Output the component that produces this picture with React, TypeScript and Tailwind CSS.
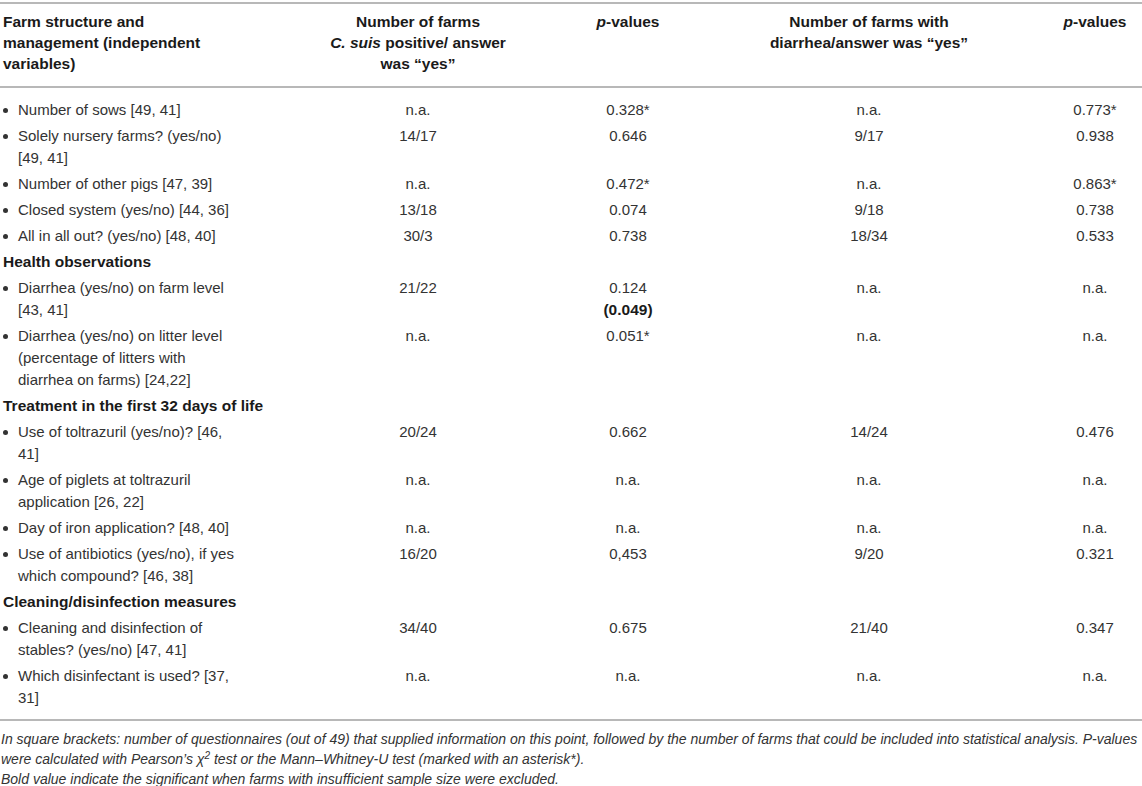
import React from 'react';

type Row =
  | { kind: 'section'; title: string }
  | { kind: 'item'; label: string[]; pos: string; p1: React.ReactNode; dia: string; p2: string };

const rows: Row[] = [
  { kind: 'item', label: ['Number of sows [49, 41]'], pos: 'n.a.', p1: '0.328*', dia: 'n.a.', p2: '0.773*' },
  { kind: 'item', label: ['Solely nursery farms? (yes/no)', '[49, 41]'], pos: '14/17', p1: '0.646', dia: '9/17', p2: '0.938' },
  { kind: 'item', label: ['Number of other pigs [47, 39]'], pos: 'n.a.', p1: '0.472*', dia: 'n.a.', p2: '0.863*' },
  { kind: 'item', label: ['Closed system (yes/no) [44, 36]'], pos: '13/18', p1: '0.074', dia: '9/18', p2: '0.738' },
  { kind: 'item', label: ['All in all out? (yes/no) [48, 40]'], pos: '30/3', p1: '0.738', dia: '18/34', p2: '0.533' },
  { kind: 'section', title: 'Health observations' },
  {
    kind: 'item',
    label: ['Diarrhea (yes/no) on farm level', '[43, 41]'],
    pos: '21/22',
    p1: (
      <>
        0.124
        <br />
        <b className="text-[15.5px] text-[#1a1a1a]">(0.049)</b>
      </>
    ),
    dia: 'n.a.',
    p2: 'n.a.',
  },
  {
    kind: 'item',
    label: ['Diarrhea (yes/no) on litter level', '(percentage of litters with', 'diarrhea on farms) [24,22]'],
    pos: 'n.a.',
    p1: '0.051*',
    dia: 'n.a.',
    p2: 'n.a.',
  },
  { kind: 'section', title: 'Treatment in the first 32 days of life' },
  { kind: 'item', label: ['Use of toltrazuril (yes/no)? [46,', '41]'], pos: '20/24', p1: '0.662', dia: '14/24', p2: '0.476' },
  { kind: 'item', label: ['Age of piglets at toltrazuril', 'application [26, 22]'], pos: 'n.a.', p1: 'n.a.', dia: 'n.a.', p2: 'n.a.' },
  { kind: 'item', label: ['Day of iron application? [48, 40]'], pos: 'n.a.', p1: 'n.a.', dia: 'n.a.', p2: 'n.a.' },
  { kind: 'item', label: ['Use of antibiotics (yes/no), if yes', 'which compound? [46, 38]'], pos: '16/20', p1: '0,453', dia: '9/20', p2: '0.321' },
  { kind: 'section', title: 'Cleaning/disinfection measures' },
  { kind: 'item', label: ['Cleaning and disinfection of', 'stables? (yes/no) [47, 41]'], pos: '34/40', p1: '0.675', dia: '21/40', p2: '0.347' },
  { kind: 'item', label: ['Which disinfectant is used? [37,', '31]'], pos: 'n.a.', p1: 'n.a.', dia: 'n.a.', p2: 'n.a.' },
];

const cols = 'grid grid-cols-[318px_200px_220px_262px_142px]';

const App: React.FC = () => {
  return (
    <div className="w-[1142px] bg-white pt-[2px] font-['Liberation_Sans',Arial,sans-serif] text-[15px] text-[#333]">
      {/* header */}
      <div className={`${cols} border-t-2 border-b-2 border-[#b8b8b8] pt-[7px] pb-[12px] text-[15.5px] font-bold leading-[21px] text-[#1a1a1a]`}>
        <div className="pl-[3px]">
          Farm structure and
          <br />
          management (independent
          <br />
          variables)
        </div>
        <div className="text-center">
          Number of farms
          <br />
          <i>C. suis</i> positive/ answer
          <br />
          was “yes”
        </div>
        <div className="text-center">
          <i>p</i>-values
        </div>
        <div className="text-center">
          Number of farms with
          <br />
          diarrhea/answer was “yes”
        </div>
        <div className="pl-[48px] text-center">
          <i>p</i>-values
        </div>
      </div>

      {/* body */}
      <div className="border-b-2 border-[#b8b8b8] pt-[9px] pb-[8px] leading-[22px]">
        {rows.map((r, i) =>
          r.kind === 'section' ? (
            <div key={i} className="py-[2px] pl-[3px] text-[15.5px] font-bold whitespace-nowrap text-[#1a1a1a]">
              {r.title}
            </div>
          ) : (
            <div key={i} className={`${cols} py-[2px]`}>
              <div className="flex pl-[3px] whitespace-nowrap">
                <span className="flex h-[22px] w-[15px] shrink-0 items-center pt-[1px]">
                  <span className="h-[5px] w-[5px] rounded-full bg-[#333]" />
                </span>
                <span>
                  {r.label.map((l, j) => (
                    <React.Fragment key={j}>
                      {j > 0 && <br />}
                      {l}
                    </React.Fragment>
                  ))}
                </span>
              </div>
              <div className="text-center">{r.pos}</div>
              <div className="text-center">{r.p1}</div>
              <div className="text-center">{r.dia}</div>
              <div className="pl-[48px] text-center">{r.p2}</div>
            </div>
          )
        )}
      </div>

      {/* notes */}
      <div className="pt-[8px] pl-[1px] text-[14px] italic leading-[20px] whitespace-nowrap text-[#333]">
        <div>
          In square brackets: number of questionnaires (out of 49) that supplied information on this point, followed by the number of farms that could be included into statistical analysis. P-values
        </div>
        <div>
          were calculated with Pearson’s χ<sup className="text-[10px]">2</sup> test or the Mann–Whitney-U test (marked with an asterisk*).
        </div>
        <div>Bold value indicate the significant when farms with insufficient sample size were excluded.</div>
      </div>
    </div>
  );
};

export default App;
